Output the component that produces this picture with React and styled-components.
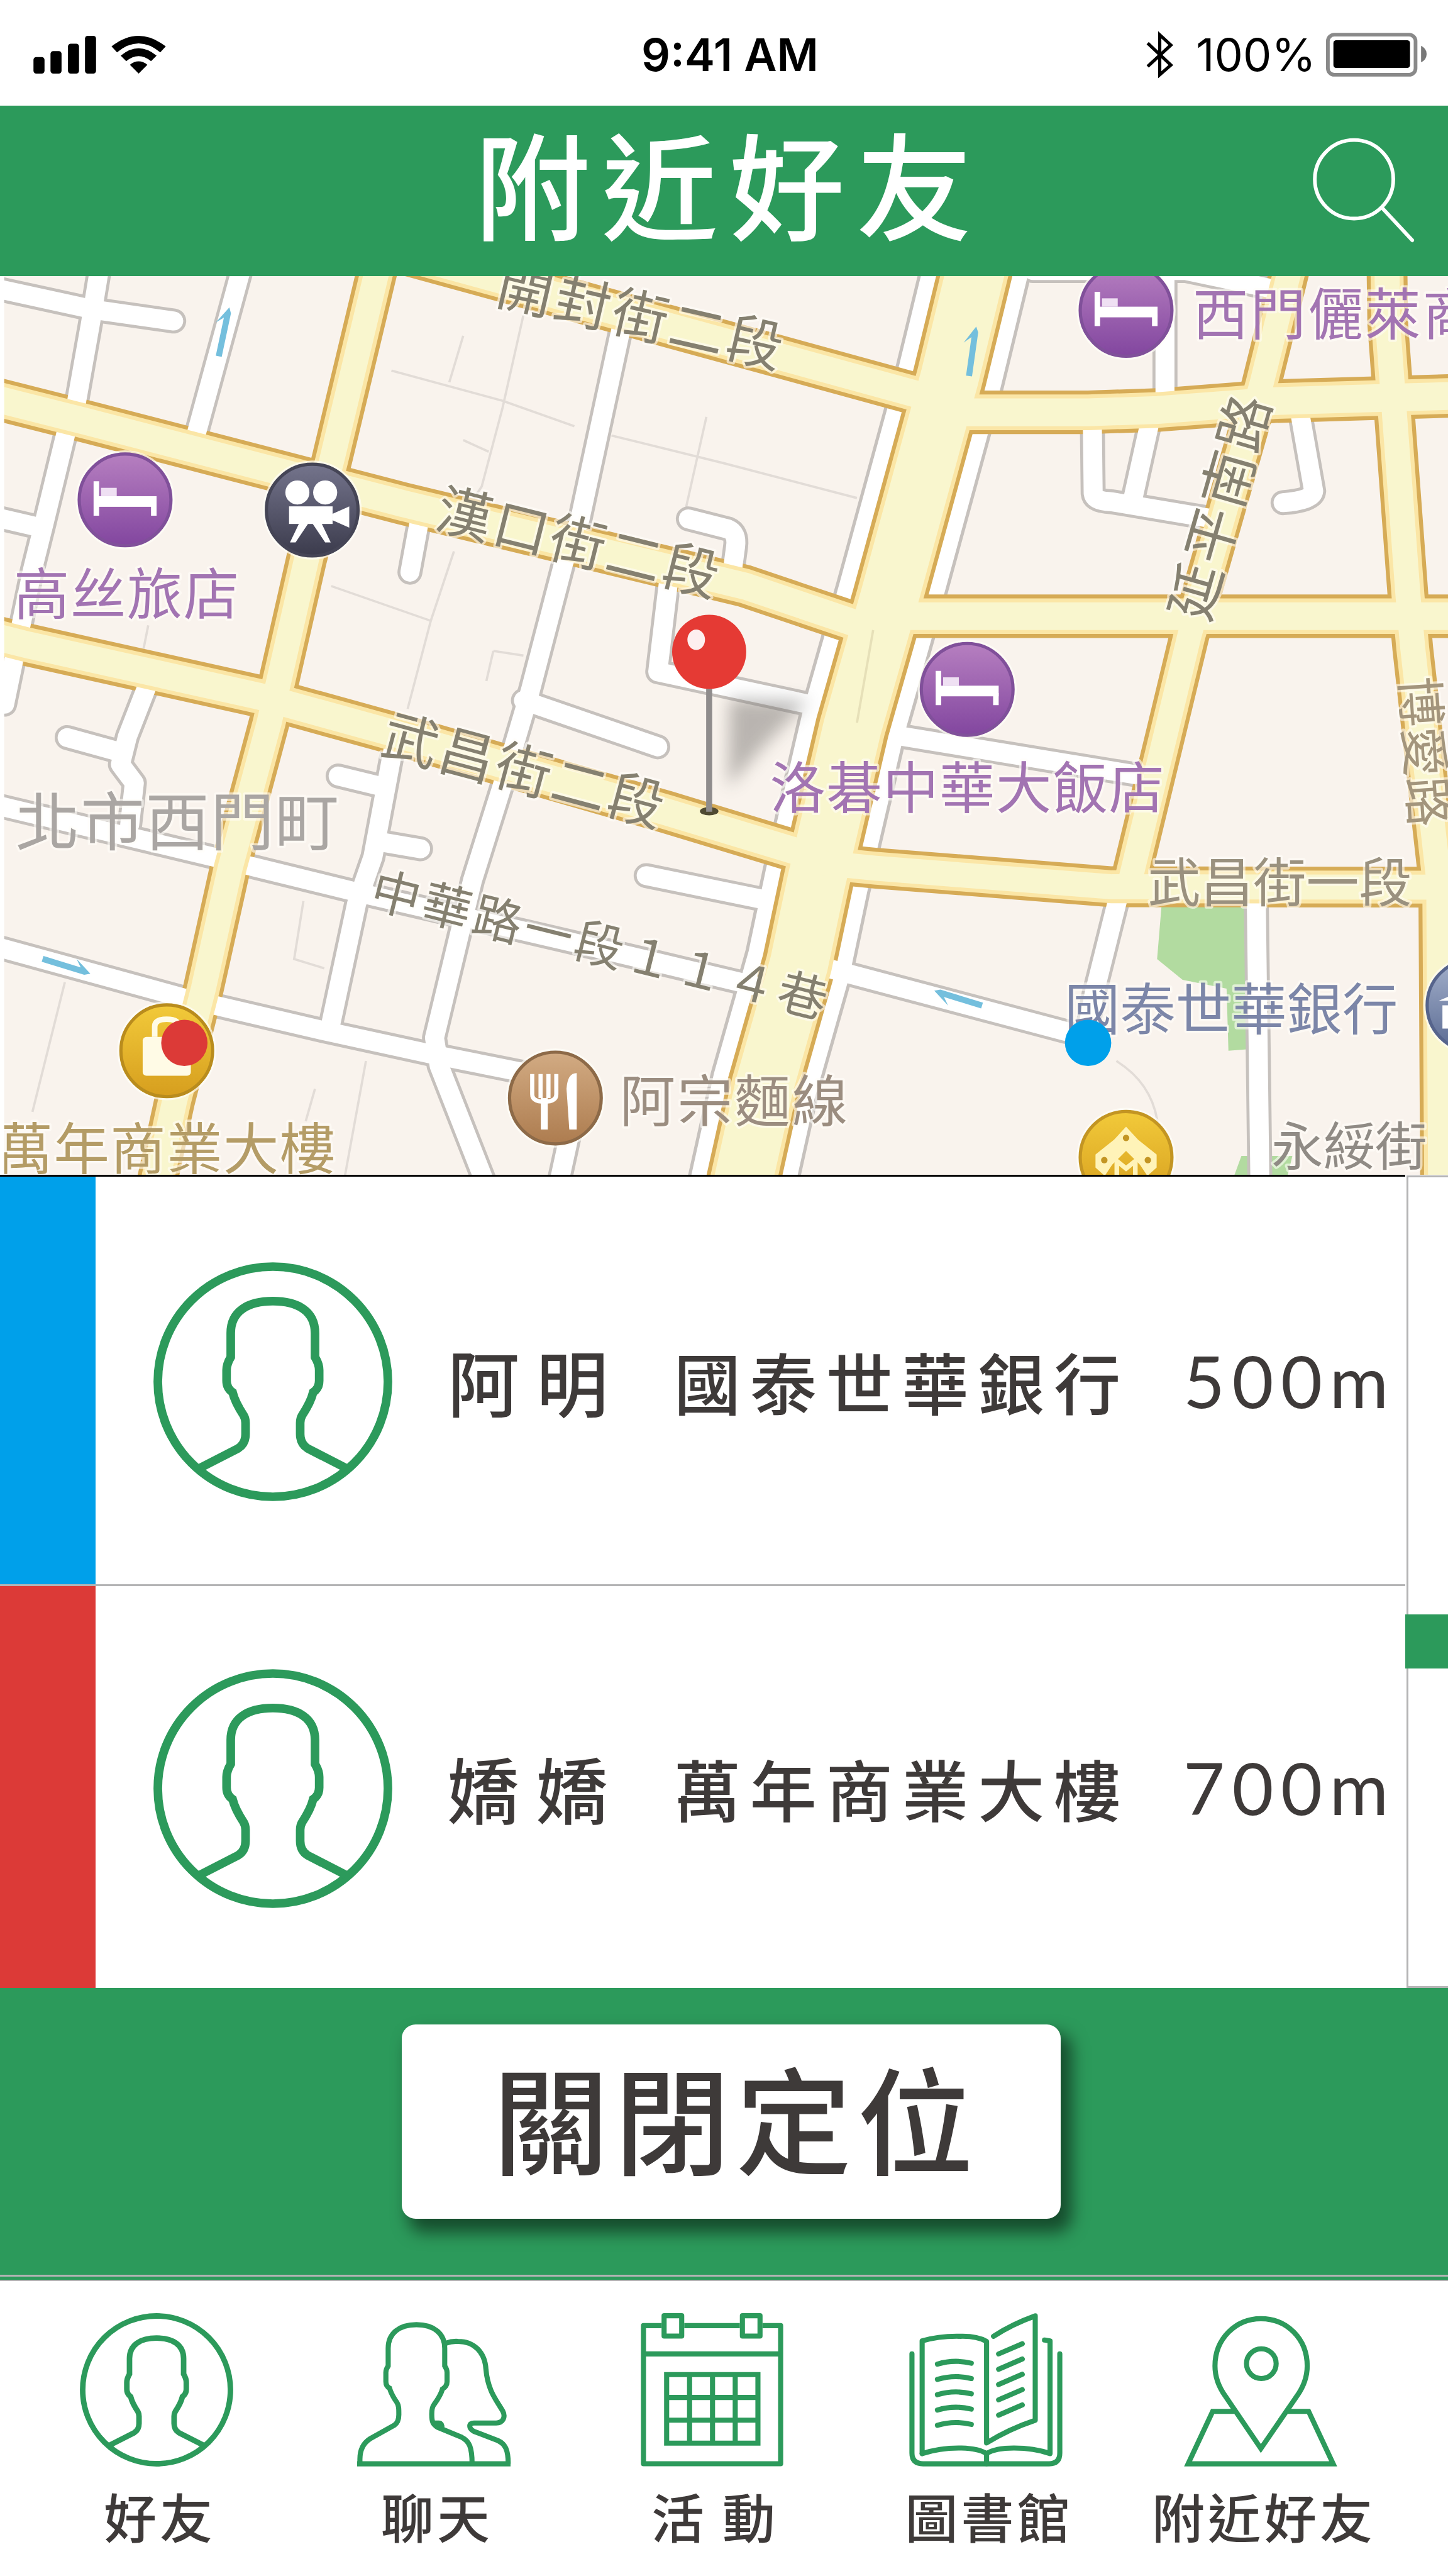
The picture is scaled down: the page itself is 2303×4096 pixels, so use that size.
import React from "react";
import styled, { createGlobalStyle } from "styled-components";

const green = "#2c9a5b";
const ink = "#3e3a39";
const line = "#b4b4b5";
const cjk = `"Noto Sans CJK TC", "Noto Sans", sans-serif`;

const GlobalStyle = createGlobalStyle`
  *, *::before, *::after { box-sizing: border-box; }
  body { margin: 0; background: #fff; color: ${ink}; font-family: ${cjk}; }
`;

const Screen = styled.main`
  display: flex;
  flex-direction: column;
  min-height: 100vh;
  background: #fff;
`;

/* ---------- status bar ---------- */

const StatusBar = styled.div`
  display: grid;
  grid-template-columns: 1fr auto 1fr;
  align-items: center;
  height: 168px;
  padding: 6px 34px 0 53px;
  color: #000;
  font-family: Inter, sans-serif;
  font-size: 72px;
  line-height: 88px;
`;

const StatusGroup = styled.div`
  display: flex;
  align-items: center;
  justify-content: ${(p) => (p.$end ? "flex-end" : "flex-start")};
  gap: ${(p) => p.$gap}px;
`;

const Clock = styled.time`
  font-weight: 600;
`;

const Glyph = styled.svg`
  display: block;
  flex: none;
  width: ${(p) => p.$w}px;
  height: ${(p) => p.$h}px;
  overflow: visible;
`;

/* ---------- header ---------- */

const Header = styled.header`
  display: grid;
  grid-template-columns: 1fr auto 1fr;
  align-items: center;
  height: 271px;
  padding: 0 53px 4px;
  background: ${green};
  color: #fff;
`;

const Title = styled.h1`
  grid-column: 2;
  margin: 0;
  padding: 0 0 28px 16px;
  font-size: 184px;
  line-height: 240px;
  font-weight: 500;
  letter-spacing: 0.1em;
`;

const IconButton = styled.button`
  justify-self: end;
  padding: 0;
  border: 0;
  background: none;
  color: inherit;
  cursor: pointer;
`;

/* ---------- map ---------- */

const MapFigure = styled.figure`
  margin: 0;
  overflow: hidden;
`;

const MapSvg = styled.svg`
  display: block;
  width: 100%;
  height: auto;
  font-family: ${cjk};
`;

const MapLabel = styled.text`
  font-size: ${(p) => p.$size || 120}px;
  letter-spacing: ${(p) => p.$track || 0}px;
  fill: ${(p) => p.$color || "#858070"};
  stroke: #fffdf8;
  stroke-width: 10px;
  stroke-opacity: 0.6;
  stroke-linejoin: round;
  paint-order: stroke;
`;

/* ---------- list ---------- */

const ListArea = styled.section`
  display: grid;
  grid-template-columns: 1fr 68px;
`;

const FriendList = styled.ul`
  margin: 0;
  padding: 0;
  list-style: none;
  border-top: 3px solid #000;
`;

const FriendRow = styled.li`
  display: grid;
  grid-template-columns: 152px 560fr 360fr 810fr 353fr;
  align-items: center;
  height: ${(p) => (p.$last ? 639 : 651)}px;
  border-bottom: ${(p) => (p.$last ? 0 : 3)}px solid ${line};
  white-space: nowrap;
`;

const Tag = styled.span`
  align-self: stretch;
  background: ${(p) => p.$color};
`;

const AvatarCell = styled.span`
  display: flex;
  justify-content: center;
  padding: 4px 0 0 4px;
`;

const Name = styled.span`
  font-size: 114px;
  line-height: 160px;
  font-weight: 500;
  letter-spacing: 0.24em;
`;

const Place = styled.span`
  font-size: 106px;
  line-height: 160px;
  font-weight: 500;
  letter-spacing: 0.14em;
`;

const Distance = styled.span`
  font-family: Lato, sans-serif;
  font-size: 114px;
  line-height: 160px;
  letter-spacing: 0.1em;
`;

const Rail = styled.div`
  display: flex;
  flex-direction: column;
  padding-top: 1px;
`;

const RailTrack = styled.div`
  flex: ${(p) => p.$grow};
  margin-left: 2px;
  border-left: 3px solid ${line};
  border-top: ${(p) => (p.$first ? 3 : 0)}px solid ${line};
  border-bottom: ${(p) => (p.$first ? 0 : 3)}px solid ${line};
`;

const RailThumb = styled.div`
  height: 86px;
  background: ${green};
`;

/* ---------- action ---------- */

const ActionBar = styled.section`
  display: flex;
  justify-content: center;
  padding: 58px 0 89px;
  background: ${green};
`;

const ActionButton = styled.button`
  width: 1048px;
  height: 309px;
  margin-left: 22px;
  padding: 0 0 20px 16px;
  border: 0;
  border-radius: 22px;
  background: #fff;
  box-shadow: 14px 18px 26px 4px rgba(0, 0, 0, 0.5);
  color: ${ink};
  font-family: inherit;
  font-size: 184px;
  line-height: 240px;
  font-weight: 500;
  letter-spacing: 0.05em;
  cursor: pointer;
`;

const Rule = styled.div`
  height: 10px;
  border-top: 3px solid ${line};
  border-bottom: 2px solid ${line};
  background: ${green};
`;

/* ---------- tab bar ---------- */

const TabBar = styled.nav`
  display: grid;
  grid-template-columns: 442fr 440fr 444fr 428fr 446fr;
  padding: 51px 75px 32px 28px;
`;

const Tab = styled.a`
  display: flex;
  flex-direction: column;
  align-items: center;
  gap: 18px;
  color: ${ink};
  font-size: 84px;
  line-height: 120px;
  font-weight: 500;
  letter-spacing: 0.06em;
  text-decoration: none;
  white-space: nowrap;
`;

const TabText = styled.span`
  padding-left: 10px;
`;

/* ---------- drawings ---------- */

function Avatar({ size }) {
  return (
    <Glyph $w={size} $h={size} viewBox="0 0 516 516" fill="none" stroke={green} strokeWidth="18.6" aria-hidden="true">
      <circle cx="258" cy="258" r="248.5" />
      <path d="M101 444 L183 402 Q199 392 199 371 L199 347 Q199 338 195 331 Q176 302 171 281 Q158 272 158 256 L158 233 Q158 220 167 205 L167 153 C167 105 205 84 258 84 C311 84 349 105 349 153 L349 205 Q358 220 358 233 L358 256 Q358 272 345 281 Q340 302 321 331 Q317 338 317 347 L317 371 Q317 392 333 402 L415 444" />
    </Glyph>
  );
}

function TabIcon({ w = 331, children }) {
  return (
    <Glyph $w={Math.round(w * 0.737)} $h={244} viewBox={`0 0 ${w} 331`} fill="none" stroke={green} strokeWidth="11" aria-hidden="true">
      {children}
    </Glyph>
  );
}

const ChatIcon = () => (
  <TabIcon>
    <path d="M6 325 V315 C6 294 14 280 28 271 L80 242 Q90 235 90 219 C90 205 90 200 86 193 Q74 176 70 162 Q62 158 62 148 V128 Q62 121 67 114 V76 C67 44 90 25 128 25 C166 25 189 44 189 76 V114 Q194 121 194 128 V148 Q194 158 184 164 Q180 178 166 197 Q161 203 161 218 C161 236 164 240 173 246 L226 268 C242 276 248 290 248 325" />
    <path d="M191 65 Q204 60 218 61 C252 61 276 84 278 122 C282 168 302 190 314 211 C321 224 315 237 300 237 H252 C240 237 240 248 252 255 L304 275 C319 282 326 294 326 325" />
    <path d="M164 237 H176 Q184 237 183 249" />
    <path d="M0 325 H331" />
  </TabIcon>
);

const CalendarIcon = () => (
  <TabIcon w={308}>
    <path d="M45 27 H6 V325 H302 V27 H263 M94 27 H214 M6 88 H302" strokeLinejoin="round" />
    <rect x="50.5" y="5.5" width="38" height="44" strokeLinejoin="round" />
    <rect x="219.5" y="5.5" width="38" height="44" strokeLinejoin="round" />
    <path d="M56 132.5 H253 V280.5 H56 Z M105.5 132 V280 M155 132 V280 M204 132 V280 M56 182 H253 M56 231 H253" />
  </TabIcon>
);

const BookIcon = () => (
  <TabIcon>
    <g strokeLinecap="round" strokeLinejoin="round">
      <path d="M6 88 V302 Q6 325 30 325 H302 Q325 325 325 302 V88" />
      <path d="M28 303 V60 Q65 49 110 50 Q146 49 167 61 V280 Q215 250 272 231 V6 Q222 24 182 50" />
      <path d="M28 303 Q68 290 113 291 Q150 292 167 303 Q186 291 226 291 Q270 291 304 303 V60 L292 58 M167 303 V325" />
      {[0, 33, 66, 99, 132].map((y) => (
        <path key={y} d={`M61 ${110 + y} Q97 ${99 + y} 134 ${108 + y} M193 ${88 + y} L244 ${66 + y}`} />
      ))}
    </g>
  </TabIcon>
);

const PinIcon = () => (
  <TabIcon>
    <path d="M166 292 L90 180 C74 158 67 138 67 114 C67 55 112 12 166 12 C222 12 266 55 266 114 C266 138 259 158 243 180 Z" />
    <circle cx="167" cy="109" r="32" />
    <path d="M110 212 H62 L9 325 H322 L269 212 H222" />
  </TabIcon>
);

const SearchIcon = () => (
  <Glyph $w={162} $h={166} viewBox="0 0 220 226" fill="none" stroke="#fff" strokeWidth="8" aria-hidden="true">
    <circle cx="89" cy="90" r="85" />
    <path d="M150 152 L215 222" strokeLinecap="round" />
  </Glyph>
);

const SignalIcon = () => (
  <Glyph $w={100} $h={60} viewBox="0 0 136 82" aria-label="signal">
    <rect x="0" y="46" width="24" height="36" rx="6" />
    <rect x="37" y="33" width="24" height="49" rx="6" />
    <rect x="75" y="17" width="24" height="65" rx="6" />
    <rect x="112" y="0" width="24" height="82" rx="6" />
  </Glyph>
);

const WifiIcon = () => (
  <Glyph $w={87} $h={60} viewBox="0 0 118 82" aria-label="wifi">
    <path d="M59 82 L40 63 Q59 48 78 63 Z" />
    <path d="M20 43 Q59 11 98 43 L86 55 Q59 33 32 55 Z" />
    <path d="M0 23 Q59 -23 118 23 L106 36 Q59 -3 12 36 Z" />
  </Glyph>
);

const BluetoothIcon = () => (
  <Glyph $w={43} $h={73} viewBox="0 0 58 99" fill="none" stroke="#000" strokeWidth="7" aria-label="bluetooth">
    <path d="M3 24 L53 71 L29 92 V6 L53 28 L3 74" />
  </Glyph>
);

const BatteryIcon = () => (
  <Glyph $w={160} $h={70} viewBox="0 0 218 95" aria-label="battery">
    <rect x="4" y="4" width="190" height="87" rx="14" fill="none" stroke="#898989" strokeWidth="8" />
    <rect x="16" y="16" width="166" height="60" rx="6" />
    <path d="M206 28 Q218 34 218 46 Q218 58 206 64 Z" fill="#787878" />
  </Glyph>
);

const minorRoads = [
  "M-20 620 L200 668 L375 693",
  "M218 560 L195 700 L163 880",
  "M524 570 L420 950",
  "M146 920 L95 1130 L70 1230 L10 1520",
  "M-20 1114 L92 1140",
  "M1345 690 L1252 1121 L1217 1215 L1145 1490 L1083 1700 L1020 1900 L938 2240 L948 2300 L1050 2560",
  "M908 1110 L885 1235",
  "M1486 1120 L1572 1142 Q1592 1150 1588 1180 L1580 1240",
  "M1445 1240 L1420 1450 L1745 1520",
  "M1130 1512 L1420 1612",
  "M145 1592 L265 1625",
  "M318 1480 L275 1590 L260 1650 L290 1690 L280 1780",
  "M-20 1735 L470 1852 L780 1928 L1240 2035 L1660 2135",
  "M850 1610 L805 1850 L770 1950 L712 2220",
  "M730 1675 L825 1698",
  "M815 1816 L908 1832",
  "M-20 2040 L400 2155 L700 2225 L930 2275 L1180 2325",
  "M1395 1890 L1640 1940",
  "M1240 2400 L1205 2560",
  "M2230 584 L2560 584 L2740 622",
  "M2515 590 L2515 850",
  "M2358 900 L2360 1065 Q2362 1082 2400 1083 L2620 1120",
  "M2485 900 L2445 1080",
  "M2806 890 L2836 1060 Q2834 1080 2770 1085",
  "M1940 1588 L2450 1672",
  "M2416 1930 L2362 2145 L2345 2235",
  "M1780 2088 L2300 2226",
  "M2712 1930 L2720 2560",
];

const boulevard = "M2112 560 L2050 815 L1920 1290 L1840 1570 L1763 1900 L1725 2080 L1650 2344 L1602 2560";

const majorRoads = [
  { d: "M760 517 L1990 854", w: 84 },
  { d: "M820 560 L717 990 L662 1206 L603 1465 L581 1560 L497 1873 L439 2134 L377 2376 L337 2560", w: 80 },
  { d: "M-20 858 L190 911 L700 1043 L870 1087 L1608 1265 L1860 1350", w: 84 },
  { d: "M-20 1372 L60 1392 L560 1503 L850 1583 L1440 1753 L1760 1850", w: 84 },
  { d: boulevard, w: 152 },
  { d: "M2040 890 L2350 890 L2500 885 L2750 866 L3150 854", w: 86 },
  { d: "M1930 1330 L3150 1330", w: 86 },
  { d: "M2994 560 L2996 700 L3040 1290 L3050 1400 L3106 1900 L3110 2560", w: 80 },
  { d: "M2790 560 L2723 830 L2568 1371 L2520 1570 L2440 1900", w: 78 },
  { d: "M1770 1862 L1890 1874 L2400 1914 L3150 1915", w: 80 },
];

function Poi({ x, y, fill, rim, children }) {
  return (
    <g transform={`translate(${x} ${y})`}>
      <circle r="107" fill="#fffdf8" opacity="0.7" />
      <circle r="99" fill={fill} stroke={rim} strokeWidth="7" />
      {children}
    </g>
  );
}

const Hotel = ({ x, y }) => (
  <Poi x={x} y={y} fill="url(#purple)" rim="#80509a">
    <path d="M-62 -40 V34 M62 8 V34" stroke="#fff" strokeWidth="12" />
    <rect x="-52" y="-26" width="34" height="18" fill="#efe0f3" />
    <rect x="-62" y="-8" width="130" height="23" fill="#fff" />
  </Poi>
);

function Arrow({ x, y, angle, flip = 1 }) {
  return (
    <path
      transform={`translate(${x} ${y}) rotate(${angle}) scale(1 ${flip})`}
      d="M-54 -5 H30 L16 -20 L54 2 L42 8 H-54 Z"
      fill="#74bfdd"
    />
  );
}

function NearbyMap() {
  return (
    <MapFigure>
      <MapSvg viewBox="0 596 3126 1940" role="img" aria-label="附近地圖">
        <defs>
          <linearGradient id="purple" x1="0" y1="0" x2="0" y2="1">
            <stop offset="0" stopColor="#b67fc0" />
            <stop offset="1" stopColor="#82469f" />
          </linearGradient>
          <linearGradient id="slate" x1="0" y1="0" x2="0" y2="1">
            <stop offset="0" stopColor="#74748c" />
            <stop offset="1" stopColor="#3b3b4c" />
          </linearGradient>
          <linearGradient id="gold" x1="0" y1="0" x2="0" y2="1">
            <stop offset="0" stopColor="#f2ca3a" />
            <stop offset="1" stopColor="#d69e1e" />
          </linearGradient>
          <linearGradient id="bronze" x1="0" y1="0" x2="0" y2="1">
            <stop offset="0" stopColor="#d2ab83" />
            <stop offset="1" stopColor="#ad7c4f" />
          </linearGradient>
          <linearGradient id="steel" x1="0" y1="0" x2="0" y2="1">
            <stop offset="0" stopColor="#a3b0cb" />
            <stop offset="1" stopColor="#5a6a92" />
          </linearGradient>
          <filter id="soft" x="-50%" y="-50%" width="200%" height="200%">
            <feGaussianBlur stdDeviation="18" />
          </filter>
        </defs>

        <rect x="0" y="596" width="3126" height="1940" fill="#f9f3ed" />
        <path d="M2508 1950 H2692 V2265 L2652 2268 L2648 2134 L2553 2115 L2498 2070 Z M2665 2536 L2680 2495 H2790 L2780 2536 Z" fill="#b2dba0" />

        <g fill="none" stroke="#e2dcd7" strokeWidth="5">
          <path d="M1130 680 L1085 880 L1040 1050 L1020 1080 M845 800 L1085 865 L1240 920 M1000 725 L970 825 M1320 940 L1563 1000 L1850 1075 M1525 900 L1480 1100 M1000 950 L1055 975" />
          <path d="M980 1190 L930 1340 L880 1530 M715 1265 L930 1340 M1065 1405 L1130 1415 M1065 1405 L1050 1470 M655 1945 L635 2070 L700 2090 M140 2120 L70 2400 M790 2290 L745 2536 M320 1350 L310 1400" />
          <path d="M2410 2290 Q2490 2340 2500 2430 M680 2350 L660 2420" />
        </g>

        <g fill="none" strokeLinejoin="round" strokeLinecap="round" stroke="#c6c1bd">
          {minorRoads.map((d) => <path key={d} d={d} strokeWidth="54" />)}
          <path d={boulevard} strokeWidth="238" />
        </g>
        <path d={boulevard} fill="none" stroke="#fff" strokeWidth="224" />
        <g fill="none" stroke="#d6ab56">
          {majorRoads.map((r) => <path key={r.d} d={r.d} strokeWidth={r.w + 8} />)}
        </g>
        <g fill="none" stroke="#fff" strokeLinecap="round" strokeLinejoin="round">
          {minorRoads.map((d) => <path key={d} d={d} strokeWidth="41" />)}
        </g>
        <g fill="none" stroke="#fbe6a6">
          {majorRoads.map((r) => <path key={r.d} d={r.d} strokeWidth={r.w - 9} />)}
        </g>
        <g fill="none" stroke="#f9f6ce">
          {majorRoads.map((r) => <path key={r.d} d={r.d} strokeWidth={r.w - 26} />)}
        </g>
        <path d="M1885 1360 L1850 1560" stroke="#e6e0b8" strokeWidth="5" />

        <Arrow x={482} y={716} angle={-78} />
        <Arrow x={2098} y={758} angle={-82} />
        <Arrow x={144} y={2084} angle={17} />
        <Arrow x={2068} y={2156} angle={197} />

        <MapLabel textAnchor="middle" $track={7} transform="translate(1376 726) rotate(13)">開封街二段</MapLabel>
        <MapLabel textAnchor="middle" $track={6} transform="translate(1240 1214) rotate(14)">漢口街二段</MapLabel>
        <MapLabel textAnchor="middle" $track={6} transform="translate(1122 1706) rotate(15)">武昌街二段</MapLabel>
        <MapLabel textAnchor="middle" $size={106} $track={7} transform="translate(1288 2078) rotate(14)">中華路一段１１４巷</MapLabel>
        <MapLabel textAnchor="middle" $track={6} transform="translate(2677 1104) rotate(-74)">延平南路</MapLabel>
        <MapLabel textAnchor="middle" $size={108} $color="#a3957c" transform="translate(3035 1625) rotate(86)">博愛路</MapLabel>
        <MapLabel x="30" y="1326" $track={2} $color="#a274b2">高丝旅店</MapLabel>
        <MapLabel x="2575" y="722" $track={4} $color="#a274b2">西門儷萊商</MapLabel>
        <MapLabel x="1662" y="1745" $track={2} $color="#a274b2">洛碁中華大飯店</MapLabel>
        <MapLabel x="2478" y="1946" $size={114} $color="#9a917f">武昌街一段</MapLabel>
        <MapLabel x="2298" y="2222" $color="#7c86a8">國泰世華銀行</MapLabel>
        <MapLabel x="2745" y="2516" $size={112} $color="#908b85">永綏街</MapLabel>
        <MapLabel x="1338" y="2420" $track={4} $color="#9b8d80">阿宗麵線</MapLabel>
        <MapLabel x="-6" y="2523" $track={2} $color="#b49c66">萬年商業大樓</MapLabel>
        <MapLabel x="34" y="1824" $size={138} $track={2} $color="#aaa6a3">北市西門町</MapLabel>

        <Hotel x={270} y={1079} />
        <Hotel x={2431} y={670} />
        <Hotel x={2088} y={1488} />
        <Poi x={674} y={1101} fill="url(#slate)" rim="#454556">
          <g fill="#fff">
            <circle cx="-32" cy="-38" r="26" />
            <circle cx="28" cy="-38" r="26" />
            <rect x="-50" y="-8" width="94" height="38" />
            <path d="M44 8 L80 -8 V38 L44 22 Z M-28 28 L-48 70 H-36 L-8 28 Z M20 28 L40 70 H28 L0 28 Z" />
          </g>
        </Poi>
        <Poi x={360} y={2268} fill="url(#gold)" rim="#b98c1d">
          <rect x="-52" y="-30" width="104" height="84" rx="8" fill="#fffbe6" />
          <path d="M-26 -30 V-52 Q-26 -68 0 -68 Q26 -68 26 -52 V-30" stroke="#fffbe6" strokeWidth="12" fill="none" />
        </Poi>
        <Poi x={1199} y={2370} fill="url(#bronze)" rim="#8d6a48">
          <g fill="none" stroke="#fff" strokeWidth="9">
            <path d="M-50 -52 V-8 Q-50 8 -24 8 Q2 8 2 -8 V-52 M-32 -52 V0 M-15 -52 V0" />
            <path d="M-24 0 V68" strokeWidth="15" />
          </g>
          <path d="M24 -20 Q26 -54 46 -54 V68 H30 Z" fill="#fff" />
        </Poi>
        <Poi x={2431} y={2498} fill="url(#gold)" rim="#c39523">
          <path d="M0 -66 L26 -38 L66 -6 V22 L46 40 L30 16 L0 -14 L-30 16 L-46 40 L-66 22 V-6 L-26 -38 Z" fill="#fff3b8" />
          <g fill="#c39523">
            <circle cx="0" cy="-42" r="7" />
            <circle cx="-47" cy="6" r="7" />
            <circle cx="47" cy="6" r="7" />
          </g>
          <path d="M-20 40 V8 L0 24 L20 8 V40" stroke="#fff3b8" strokeWidth="10" fill="none" />
        </Poi>
        <Poi x={3180} y={2170} fill="url(#steel)" rim="#56648c">
          <path d="M-74 -10 H20 V-50 Z M-66 0 H-46 V50 H-66 Z" fill="#fff" />
        </Poi>

        <path d="M1575 1508 L1745 1512 L1640 1620 L1572 1700 Z" fill="#6d6a68" opacity="0.45" filter="url(#soft)" />
        <ellipse cx="1531" cy="1751" rx="20" ry="9" fill="#4f4a33" />
        <path d="M1531 1480 V1752" stroke="#8f8c8c" strokeWidth="13" />
        <circle cx="1531" cy="1407" r="80" fill="#e53a34" />
        <ellipse cx="1503" cy="1381" rx="19" ry="22" fill="#fff" opacity="0.92" />

        <circle cx="398" cy="2251" r="50" fill="#dc3a37" />
        <circle cx="2349" cy="2251" r="50" fill="#00a0ea" />
        <rect x="0" y="596" width="9" height="1940" fill="#fff" />
      </MapSvg>
    </MapFigure>
  );
}

/* ---------- data ---------- */

const friends = [
  { name: "阿明", place: "國泰世華銀行", distance: "500m", color: "#00a0ea" },
  { name: "嬌嬌", place: "萬年商業大樓", distance: "700m", color: "#dc3a37" },
];

const tabs = [
  { label: "好友", icon: <Avatar size={244} /> },
  { label: "聊天", icon: <ChatIcon /> },
  { label: "活 動", icon: <CalendarIcon /> },
  { label: "圖書館", icon: <BookIcon /> },
  { label: "附近好友", icon: <PinIcon /> },
];

export default function App() {
  return (
    <Screen>
      <GlobalStyle />
      <StatusBar>
        <StatusGroup $gap={24}>
          <SignalIcon />
          <WifiIcon />
        </StatusGroup>
        <Clock>9:41 AM</Clock>
        <StatusGroup $end $gap={36}>
          <BluetoothIcon />
          <StatusGroup $end $gap={16}>
            <span>100%</span>
            <BatteryIcon />
          </StatusGroup>
        </StatusGroup>
      </StatusBar>

      <Header>
        <Title>附近好友</Title>
        <IconButton type="button" aria-label="搜尋">
          <SearchIcon />
        </IconButton>
      </Header>

      <NearbyMap />

      <ListArea>
        <FriendList>
          {friends.map((f, i) => (
            <FriendRow key={f.name} $last={i === friends.length - 1}>
              <Tag $color={f.color} />
              <AvatarCell>
                <Avatar size={380} />
              </AvatarCell>
              <Name>{f.name}</Name>
              <Place>{f.place}</Place>
              <Distance>{f.distance}</Distance>
            </FriendRow>
          ))}
        </FriendList>
        <Rail aria-hidden="true">
          <RailTrack $grow={699} $first />
          <RailThumb />
          <RailTrack $grow={508} />
        </Rail>
      </ListArea>

      <ActionBar>
        <ActionButton type="button">關閉定位</ActionButton>
      </ActionBar>
      <Rule />

      <TabBar aria-label="主選單">
        {tabs.map((t) => (
          <Tab key={t.label} href="#">
            {t.icon}
            <TabText>{t.label}</TabText>
          </Tab>
        ))}
      </TabBar>
    </Screen>
  );
}
